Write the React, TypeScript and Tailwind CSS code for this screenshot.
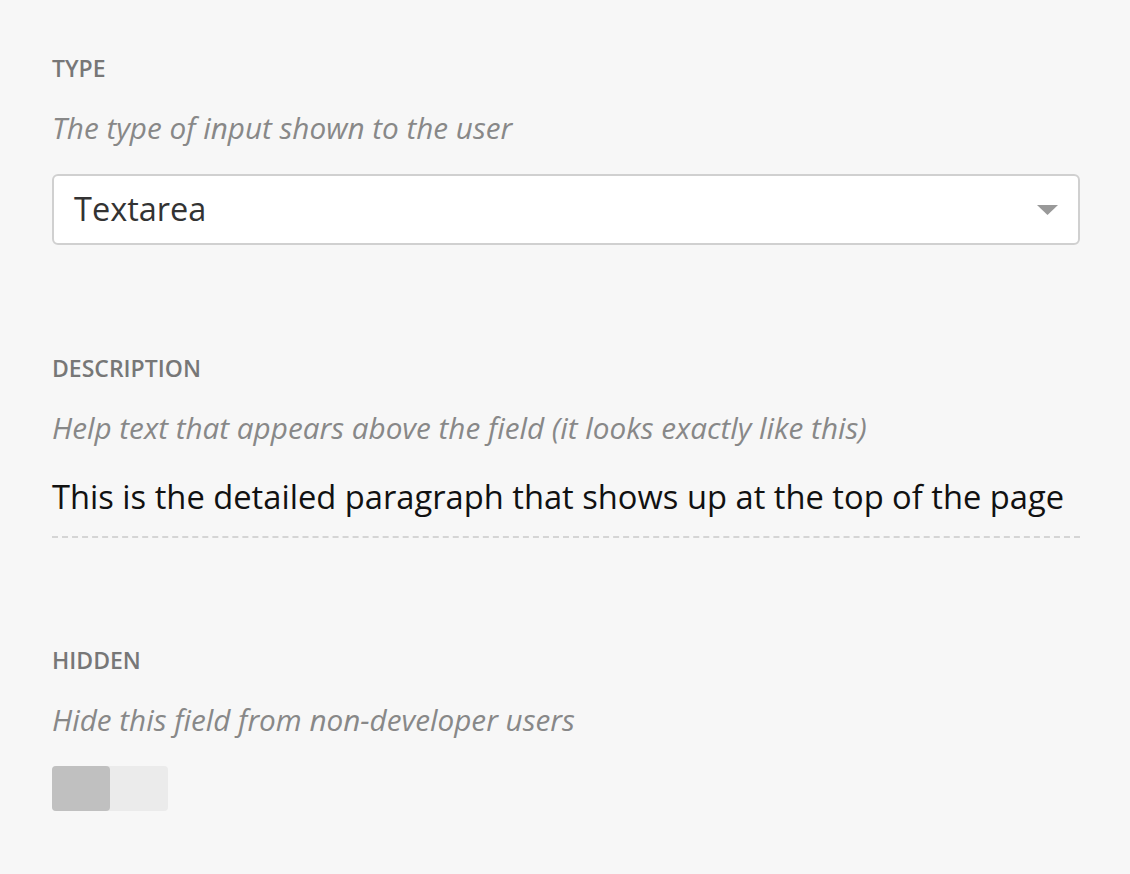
import React from "react";

const font = { fontFamily: '"Open Sans", sans-serif' };

function Label({ children }: { children: React.ReactNode }) {
  return (
    <div className="text-[23px] leading-[30px] font-semibold uppercase text-[#777777]">{children}</div>
  );
}

function Help({ children }: { children: React.ReactNode }) {
  return <div className="mt-[25px] text-[29.7px] leading-[40px] italic text-[#888888]">{children}</div>;
}

export default function App() {
  return (
    <div className="min-h-[874px] w-full bg-[#f7f7f7] pl-[52px] pr-[50px] pt-[53px]" style={font}>
      {/* Type */}
      <section>
        <Label>Type</Label>
        <Help>The type of input shown to the user</Help>
        <div className="mt-[26px] flex h-[71px] items-center justify-between rounded-[6px] border-2 border-[#d0d0d0] bg-white pl-[20px] pr-[20px]">
          <span className="text-[32.5px] text-[#333333]">Textarea</span>
          <svg width="21" height="10" viewBox="0 0 21 10">
            <path d="M0 0 L21 0 L10.5 10 Z" fill="#999999" />
          </svg>
        </div>
      </section>

      {/* Description */}
      <section className="mt-[108px]">
        <Label>Description</Label>
        <Help>Help text that appears above the field (it looks exactly like this)</Help>
        <div className="mt-[27px] border-b-2 border-dashed border-[#d5d5d5] pb-[17px] text-[32.7px] leading-[44px] text-[#111111]">
          This is the detailed paragraph that shows up at the top of the page
        </div>
      </section>

      {/* Hidden */}
      <section className="mt-[107px]">
        <Label>Hidden</Label>
        <Help>Hide this field from non-developer users</Help>
        <div className="mt-[26px] flex h-[45px] w-[116px] rounded-[4px] bg-[#ebebeb]">
          <div className="h-full w-[58px] rounded-[4px] bg-[#c0c0c0]" />
        </div>
      </section>
    </div>
  );
}
